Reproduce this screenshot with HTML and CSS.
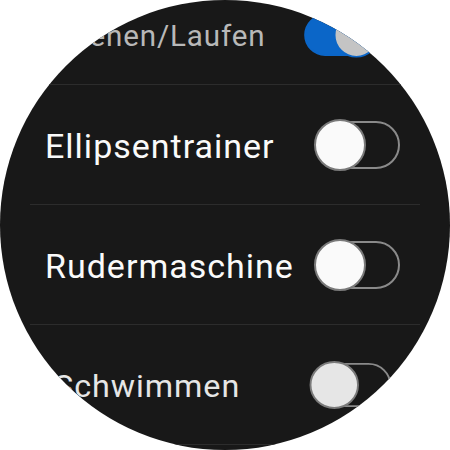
FILE: index.html
```html
<!DOCTYPE html>
<html lang="de">
<head>
<meta charset="utf-8">
<link rel="stylesheet" href="styles.css">
</head>
<body>
<div class="watch">
  <div class="list">
    <div class="row row-top">
      <div class="content">
        <span class="label">Gehen/Laufen</span>
        <span class="switch on"><span class="thumb"></span></span>
      </div>
    </div>
    <div class="row">
      <div class="content">
        <span class="label">Ellipsentrainer</span>
        <span class="switch"><span class="thumb"></span></span>
      </div>
    </div>
    <div class="row">
      <div class="content">
        <span class="label">Rudermaschine</span>
        <span class="switch"><span class="thumb"></span></span>
      </div>
    </div>
    <div class="row row-bottom">
      <div class="content">
        <span class="label">Schwimmen</span>
        <span class="switch"><span class="thumb"></span></span>
      </div>
    </div>
  </div>
</div>
</body>
</html>
```

FILE: styles.css
```css
html, body {
  margin: 0;
  padding: 0;
  background: #ffffff;
}

.watch {
  width: 450px;
  height: 450px;
  border-radius: 50%;
  overflow: hidden;
  background: #181818;
  font-family: Roboto, "Noto Sans", sans-serif;
}

.list {
  margin-top: -35px;
  display: flex;
  flex-direction: column;
}

.row {
  height: 120px;
  margin: 0 30px;
  border-bottom: 1px solid #2c2c2c;
  box-sizing: border-box;
  display: flex;
}

.content {
  flex: 1;
  display: flex;
  align-items: center;
  justify-content: space-between;
  padding: 0 20px 0 15px;
  transform-origin: 195px 60px;
}

.label {
  font-size: 34px;
  letter-spacing: 1px;
  color: #fafafa;
  line-height: 38px;
  padding-top: 2px;
}

.switch {
  position: relative;
  width: 84px;
  height: 48px;
  box-sizing: border-box;
  border: 2px solid #8a8a8a;
  border-radius: 24px;
}

.thumb {
  position: absolute;
  left: -4px;
  top: -4px;
  width: 52px;
  height: 52px;
  box-sizing: border-box;
  border-radius: 50%;
  background: #fafafa;
  border: 2px solid #7a7a7a;
}

.switch.on {
  background: #0b66c8;
  border-color: #0b66c8;
}

.switch.on .thumb {
  left: auto;
  right: -4px;
  background: #c4c4c4;
  border-color: #0b66c8;
}

.row-top .content {
  transform: translateY(10px) scale(0.87);
}

.row-top .label {
  color: #b8b8b8;
}

.row-bottom .content {
  transform: scale(0.95, 0.92);
}

.row-bottom .label {
  color: #e6e6e6;
}

.row-bottom .thumb {
  background: #e6e6e6;
}
```
